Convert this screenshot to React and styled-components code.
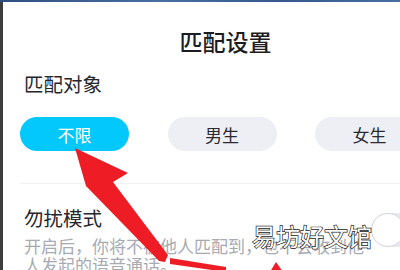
import React from "react";
import styled, { createGlobalStyle } from "styled-components";

const Global = createGlobalStyle`
  html, body { margin: 0; padding: 0; background: #fff; }
  body { font-family: "Noto Sans CJK SC", "Noto Sans", sans-serif; }
`;

const Frame = styled.div`
  position: relative;
  width: 400px;
  height: 270px;
  overflow: hidden;
  display: flex;
  flex-direction: column;
  background: #fff;
`;

const TopBar = styled.div`
  height: 2px;
  flex: 0 0 2px;
  background: linear-gradient(90deg, #2f4f80, #4a6ea3 40%, #36588c 70%, #4a6ea3);
`;

const Body = styled.div`
  display: flex;
  flex: 1;
`;

const LeftStrip = styled.div`
  width: 3px;
  flex: 0 0 3px;
  background: #3c3c3c;
`;

const Panel = styled.div`
  width: 446px;
  flex: 0 0 446px;
  background: #fff;
  padding: 0 18px 0 17px;
  box-sizing: border-box;
  display: flex;
  flex-direction: column;
`;

const Title = styled.div`
  margin-top: 24px;
  height: 30px;
  line-height: 30px;
  text-align: center;
  font-size: 23px;
  font-weight: 500;
  color: #1c1c22;
`;

const Label = styled.div`
  margin-top: ${(p) => p.$mt}px;
  padding-left: 4px;
  font-size: 19.5px;
  line-height: 26px;
  color: #26262b;
`;

const Pills = styled.div`
  margin-top: 20px;
  display: grid;
  grid-template-columns: repeat(3, 109px);
  column-gap: 38.5px;
`;

const Pill = styled.div`
  height: 34px;
  border-radius: 17px;
  display: flex;
  align-items: center;
  justify-content: center;
  font-size: 17px;
  background: ${(p) => (p.$active ? "#03c8fb" : "#eeeff4")};
  color: ${(p) => (p.$active ? "#ffffff" : "#2a2a30")};
`;

const Divider = styled.div`
  margin-top: 32px;
  height: 1px;
  background: #f2f2f5;
`;

const Row = styled.div`
  display: flex;
  align-items: flex-start;
`;

const TextCol = styled.div`
  width: 344px;
  flex: 0 0 344px;
`;

const Desc = styled.div`
  margin-top: 5px;
  padding-left: 4px;
  font-size: 17px;
  line-height: 19px;
  color: #a8aab2;
`;

const Switch = styled.div`
  margin-left: auto;
  margin-top: 29px;
  width: 60px;
  height: 34px;
  border-radius: 17px;
  background: #e8e9ee;
  position: relative;
`;

const Knob = styled.div`
  position: absolute;
  left: 0;
  top: 0;
  width: 32px;
  height: 32px;
  border-radius: 50%;
  background: #fff;
  border: 1.5px solid #d5d6dc;
`;

const Watermark = styled.div`
  position: absolute;
  left: 252px;
  top: 221px;
  font-size: 24px;
  line-height: 30px;
  color: #fff;
  -webkit-text-stroke: 1.4px #222;
  paint-order: stroke fill;
  font-family: "Noto Sans CJK SC", sans-serif;
`;

const Arrows = styled.svg`
  position: absolute;
  left: 0;
  top: 0;
  width: 400px;
  height: 270px;
  pointer-events: none;
`;

export default function App() {
  return (
    <>
      <Global />
      <Frame>
        <TopBar />
        <Body>
          <LeftStrip />
          <Panel>
            <Title>匹配设置</Title>
            <Label $mt={15}>匹配对象</Label>
            <Pills>
              <Pill $active>不限</Pill>
              <Pill>男生</Pill>
              <Pill>女生</Pill>
            </Pills>
            <Divider />
            <Row>
              <TextCol>
                <Label $mt={21}>勿扰模式</Label>
                <Desc>开启后，你将不被他人匹配到，也不会收到他人发起的语音通话。</Desc>
              </TextCol>
              <Switch>
                <Knob />
              </Switch>
            </Row>
          </Panel>
        </Body>
        <Arrows viewBox="0 0 400 270">
          <polygon
            points="75,148 128,173 113,182 168,255 165,262 159,261 86,186"
            fill="#ee1c24"
          />
          <polygon points="170,258 226,267 226,272 170,264" fill="#ee1c24" />
          <polygon points="270,272 276,262 283,272" fill="#ee1c24" />
        </Arrows>
        <Watermark>易坊好文馆</Watermark>
      </Frame>
    </>
  );
}
